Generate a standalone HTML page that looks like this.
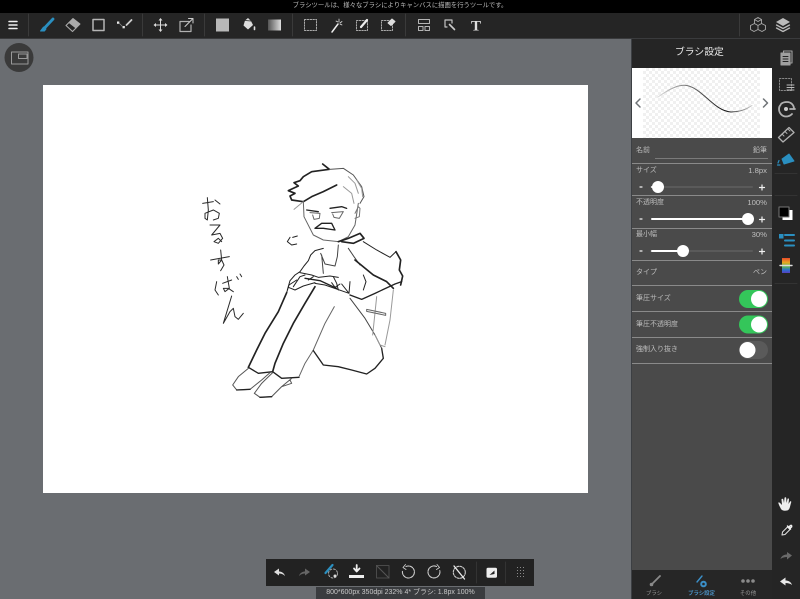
<!DOCTYPE html>
<html lang="ja">
<head>
<meta charset="utf-8">
<style>
html,body{margin:0;padding:0;width:800px;height:599px;overflow:hidden;background:#6a6d71;font-family:"Liberation Sans","Noto Sans CJK JP",sans-serif}
.a{position:absolute}
.t{position:absolute;white-space:nowrap;color:#bebebe;font-size:7px;line-height:10px}
.n{font-size:7.7px}
.r{text-align:right}
.line{position:absolute;left:632px;width:140px;height:1px;background:#8a8a8a}
</style>
</head>
<body>
<div class="a" style="left:0;top:0;width:800px;height:13px;background:#000"></div>
<div class="t" style="left:288px;top:1px;font-size:6.35px;color:#bdbdbd;width:224px;text-align:center">ブラシツールは、様々なブラシによりキャンバスに描画を行うツールです。</div>
<div class="a" style="left:0;top:13px;width:800px;height:25px;background:#252525"></div>
<div class="a" style="left:0;top:38px;width:800px;height:1px;background:#3a3b3d"></div>

<!-- canvas -->
<div class="a" style="left:43px;top:85px;width:545px;height:408px;background:#fff"></div>

<!-- right panel -->
<div class="a" style="left:631px;top:39px;width:1px;height:560px;background:#3c3f43"></div>
<div class="a" style="left:632px;top:39px;width:140px;height:29px;background:#252525"></div>
<div class="t" style="left:675px;top:47px;color:#e8e8e8;font-size:9.8px;line-height:12px">ブラシ設定</div>
<div class="a" style="left:632px;top:68px;width:140px;height:70px;background:#fff"></div>
<div class="a" style="left:643px;top:68px;width:117px;height:70px;background-color:#fff;background-image:linear-gradient(45deg,#f0f0f0 25%,transparent 25%,transparent 75%,#f0f0f0 75%),linear-gradient(45deg,#f0f0f0 25%,transparent 25%,transparent 75%,#f0f0f0 75%);background-size:6px 6px;background-position:0 0,3px 3px"></div>
<div class="a" style="left:632px;top:138px;width:140px;height:432px;background:#4a4a4a"></div>
<div class="a" style="left:632px;top:570px;width:140px;height:29px;background:#262626"></div>
<div class="a" style="left:772px;top:39px;width:28px;height:560px;background:#252525"></div>

<div class="line" style="top:163px"></div>
<div class="line" style="top:195px"></div>
<div class="line" style="top:228px"></div>
<div class="line" style="top:260px"></div>
<div class="line" style="top:285px"></div>
<div class="line" style="top:311px"></div>
<div class="line" style="top:337px"></div>
<div class="line" style="top:363px"></div>
<div class="a" style="left:655px;top:158px;width:113px;height:1px;background:#7a7a7a"></div>

<div class="t" style="left:636px;top:146px">名前</div>
<div class="t r" style="right:33px;top:146px">鉛筆</div>
<div class="t" style="left:636px;top:166px">サイズ</div>
<div class="t r n" style="right:33px;top:166px">1.8px</div>
<div class="t" style="left:636px;top:198px">不透明度</div>
<div class="t r n" style="right:33px;top:198px">100%</div>
<div class="t" style="left:636px;top:230px">最小幅</div>
<div class="t r n" style="right:33px;top:230px">30%</div>
<div class="t" style="left:636px;top:268px">タイプ</div>
<div class="t r" style="right:33px;top:268px">ペン</div>
<div class="t" style="left:636px;top:294px">筆圧サイズ</div>
<div class="t" style="left:636px;top:320px">筆圧不透明度</div>
<div class="t" style="left:636px;top:345px">強制入り抜き</div>
<div class="t" style="left:632px;top:589px;width:44px;text-align:center;font-size:5.4px;color:#9a9a9a">ブラシ</div>
<div class="t" style="left:678px;top:589px;width:47px;text-align:center;font-size:5.4px;color:#4a90c2;font-weight:bold">ブラシ設定</div>
<div class="t" style="left:725px;top:589px;width:46px;text-align:center;font-size:5.4px;color:#9a9a9a">その他</div>

<!-- bottom bar -->
<div class="a" style="left:266px;top:559px;width:268px;height:27px;background:#222;"></div>
<div class="a" style="left:316px;top:587px;width:169px;height:12px;background:#3a3c3f"></div>
<div class="t" style="left:316px;top:588px;width:169px;text-align:center;font-size:7px;color:#c8c8c8">800*600px 350dpi 232% 4* ブラシ: 1.8px 100%</div>

<svg class="a" style="left:0;top:0" width="800" height="599" viewBox="0 0 800 599" fill="none" stroke-linecap="round" stroke-linejoin="round">
<defs>
<linearGradient id="g1"><stop offset="0" stop-color="#555"/><stop offset="1" stop-color="#ddd"/></linearGradient>
<linearGradient id="g2" x1="0" x2="1"><stop offset="0" stop-color="#ddd"/><stop offset=".3" stop-color="#777"/><stop offset=".72" stop-color="#111"/><stop offset="1" stop-color="#ccc"/></linearGradient>
<linearGradient id="g3" x1="0" y1="0" x2="0" y2="1"><stop offset="0" stop-color="#e84a2a"/><stop offset=".3" stop-color="#e8a822"/><stop offset=".55" stop-color="#5fb84a"/><stop offset=".8" stop-color="#2a6fd0"/><stop offset="1" stop-color="#5a3fc0"/></linearGradient>
</defs>
<!-- TOP TOOLBAR -->
<g stroke="#3a3a3a" stroke-width="1"><path d="M28.500 14V36M142.500 14V36M204.500 14V36M292.500 14V36M405.500 14V36M739.500 14V36"/></g>
<path d="M9 21.500H17M9 25H17M9 28.500H17" stroke="#eee" stroke-width="1.500"/>
<path d="M53 19L45 27.500" stroke="#2a8fc0" stroke-width="2.800"/><path d="M43.500 27L40.500 31H44.500L46 29Z" fill="#2a8fc0" stroke="#2a8fc0"/>
<path d="M69 22.500L73 18.500L80 24L76 28Z" fill="#aaa" stroke="#aaa"/><path d="M69 22.500L66 25.500L72.500 31.500L76 28" stroke="#aaa" stroke-width="1.100"/>
<rect x="93" y="19.500" width="11" height="11" stroke="#b5b5b5" stroke-width="1.500"/>
<rect x="117" y="21.500" width="2.300" height="2.300" fill="#eee"/><rect x="122.500" y="26" width="2.300" height="2.300" fill="#eee"/><path d="M119 23L123 27" stroke="#888" stroke-width=".8"/><path d="M126.500 25L131.500 20" stroke="#ccc" stroke-width="1.800"/>
<path d="M160.500 19.500V30.500M155 25H166" stroke="#ddd" stroke-width="1"/>
<g fill="#ddd"><path d="M160.500 18L162.500 20.500H158.500ZM160.500 32L162.500 29.500H158.500ZM153.500 25L156 23V27ZM167.500 25L165 23V27Z"/></g>
<path d="M189 21.500H180V31.500H191V25" stroke="#b0b0b0" stroke-width="1.200"/><path d="M185 26.500L192 19.500" stroke="#ccc" stroke-width="1"/><path d="M188.500 18.500H193V23" stroke="#ccc" stroke-width="1"/>
<rect x="216" y="18.500" width="13" height="13" fill="#b8b8b8"/>
<path d="M245 20.500L248 18L251 21L253 25L248 29.500L243.500 25.500Z" fill="#ddd"/><path d="M245 20.500L251 21" stroke="#252525" stroke-width=".8"/><path d="M254.500 27V29.500" stroke="#ddd" stroke-width="1.600"/>
<rect x="268" y="19.500" width="13" height="11" fill="url(#g1)"/>
<rect x="304.500" y="19.500" width="12" height="11" stroke="#aaa" stroke-dasharray="1.500 1.300"/>
<path d="M332 32L338 24" stroke="#eee" stroke-width="1.500"/><path d="M339 19V22M336 21L338 22M342 21.500L340 23M342 25L340 24" stroke="#ddd" stroke-width=".8"/>
<rect x="356.500" y="20.500" width="11" height="10" stroke="#aaa" stroke-dasharray="1.500 1.300"/><path d="M361 27L367 20" stroke="#eee" stroke-width="2.200"/>
<rect x="381.500" y="20.500" width="11" height="10" stroke="#aaa" stroke-dasharray="1.500 1.300"/><path d="M388 23L392 19L395 21.500L391 25.500Z" fill="#ddd" stroke="#ddd"/>
<path d="M418.500 19.500H429.500V23.500H418.500ZM418.500 26.500H423V30.500H418.500ZM425 26.500H429.500V30.500H425Z" stroke="#b5b5b5" stroke-width="1"/>
<path d="M445 20H452V23M445 20V27H447" stroke="#c4c4c4" stroke-width="1.200"/><path d="M449.500 24.500L454.500 29.500" stroke="#ccc" stroke-width="1.600"/>
<text x="476" y="30.500" text-anchor="middle" font-family="Liberation Serif" font-weight="bold" font-size="15" fill="#ddd" stroke="none">T</text>
<g stroke="#aaa" stroke-width=".9"><path d="M758 17.500L761.500 19.500V23.500L758 25.500L754.500 23.500V19.500ZM754.500 23.500L758 25.500V29.500L754 31.500L750.500 29.500V25.500ZM761.500 23.500L765.500 25.500V29.500L762 31.500L758 29.500V25.500ZM754.500 19.500L758 21.500L761.500 19.500"/></g>
<path d="M783 18L790 22L783 26L776 22Z" fill="#bbb"/><path d="M776.500 25L783 28.500L789.500 25M776.500 28L783 31.500L789.500 28" stroke="#bbb" stroke-width="1.300"/>

<!-- nav circle -->
<circle cx="19" cy="57.500" r="14.500" fill="#3a3a3a"/>
<rect x="11.500" y="52" width="16.500" height="12" stroke="#999" stroke-width="1"/><rect x="18.500" y="54" width="8.500" height="4.500" stroke="#999" stroke-width="1"/>

<!-- PREVIEW -->
<path d="M658 97C672 87 680 84.500 687 85.500C703 89 714 111 731 112C740 112 747 109 752 105.500" stroke="url(#g2)" stroke-width="1"/>
<path d="M640 99L636 103L640 107M763.500 99L767.500 103L763.500 107" stroke="#6e7276" stroke-width="1.500"/>

<!-- SLIDERS -->
<g stroke="#5a5a5a" stroke-width="2"><path d="M651 187H752M651 251H752"/></g>
<path d="M652 187H658M652 219H748M652 251H683" stroke="#fff" stroke-width="2"/>
<g fill="#fff"><circle cx="658" cy="187" r="6"/><circle cx="748" cy="219" r="6"/><circle cx="683" cy="251" r="6"/></g>
<g stroke="#f0f0f0" stroke-width="1.200"><path d="M640 187H642M640 219H642M640 251H642M759.500 187.500H764.500M762 185V190M759.500 219.500H764.500M762 217V222M759.500 251.500H764.500M762 249V254"/></g>

<!-- TOGGLES -->
<rect x="739" y="290" width="29" height="18" rx="9" fill="#34c65a"/><circle cx="759" cy="299" r="8" fill="#fff"/>
<rect x="739" y="315.500" width="29" height="18" rx="9" fill="#34c65a"/><circle cx="759" cy="324.500" r="8" fill="#fff"/>
<rect x="739" y="341" width="29" height="18" rx="9" fill="#5a5a5a"/><circle cx="747.500" cy="350" r="8" fill="#fff"/>

<!-- RIGHT STRIP -->
<g stroke="#a0a0a0" stroke-width="1.100">
<rect x="781" y="53" width="9" height="12" fill="#a0a0a0"/><path d="M783.500 53V51H792V63H790"/>
<path d="M783 56.500H788M783 59H788M783 61.500H788" stroke="#252525" stroke-width="1"/>
</g>
<rect x="779.500" y="78.500" width="12" height="12" stroke="#888" stroke-dasharray="1.500 1.500"/>
<path d="M787 85H794M787 87.500H794M787 90H794" stroke="#bbb" stroke-width="1"/>
<path d="M781 104C783 102 785 102 787 102C791 102 794 105 794 109M792 114C790 116 788 116.500 786 116.500C782 116.500 779 113 779 109C779 107.500 779.500 106 780.500 105" stroke="#b0b0b0" stroke-width="1.800"/><circle cx="786" cy="109" r="2" fill="#ccc"/><path d="M790 109H795" stroke="#b0b0b0" stroke-width="1.800"/>
<path d="M778.500 137.500L789 127.500L794 132.500L783 142Z" stroke="#b0b0b0" stroke-width="1.300"/><path d="M782 134L784 136M785 131.500L787 133.500M788 129L790 131" stroke="#b0b0b0" stroke-width=".9"/>
<path d="M782 159L789 154L794 161L784 164Z" fill="#2a8fc0" stroke="#2a8fc0"/><path d="M779 160.500L778 163M777.500 165H780" stroke="#2a8fc0" stroke-width="1.200"/>
<path d="M775 173.500H797M775 195.500H797M775 283.500H797" stroke="#333" stroke-width="1"/>
<rect x="782.500" y="210" width="10" height="10" fill="#fff"/>
<rect x="779" y="207" width="10" height="10" fill="#000" stroke="#777" stroke-width="1"/>
<rect x="779" y="234" width="4.500" height="4.500" fill="#2a8fc0"/><path d="M785 235H794M785 240.500H794M785 245.500H794" stroke="#2a8fc0" stroke-width="2"/>
<rect x="782" y="258" width="8" height="15" fill="url(#g3)"/><path d="M780 265.500H792" stroke="#ddd" stroke-width="1.400"/>
<path d="M781 509C779 505 778 503 778.500 502.500C779.500 502 781 504 782 505L781.500 499.500C781.500 498.500 783 498.500 783.300 499.500L784 503L784.500 498C784.700 497 786 497 786.200 498L786.500 503L787.500 499C787.800 498 789 498.300 789 499.300L788.500 504L790 501.500C790.500 501 791.500 501.300 791.200 502.300C790 506 790 510 787 510.500C784 511 782 510.500 781 509Z" fill="#eee"/>
<path d="M782.500 532L787.500 527L790 529.500L785 534.500L782 535Z" stroke="#e4e4e4" stroke-width="1"/><path d="M787.500 526L790.500 529M789 527L790.500 525.500C791.500 525 792 526 791.500 527L790 528" stroke="#eee" stroke-width="1.500"/>
<path d="M780.500 559C781.500 555.500 784.500 554.500 787 554.500V552L792 555.500L787 559.500V557C784.500 557 782.500 557.500 780.500 559Z" fill="#6a6a6a"/>
<path d="M792 585C791 581.500 788 580.500 785.500 580.500V577.500L780 581.500L785.500 585.500V583C788 583 790 583.500 792 585Z" fill="#e8e8e8"/>

<!-- TABS -->
<path d="M660 576L653 583" stroke="#8a8a8a" stroke-width="1.800"/><circle cx="651.500" cy="584.500" r="1.800" fill="#8a8a8a"/>
<path d="M702 576L697 582" stroke="#3b8fc8" stroke-width="1.400"/><circle cx="703.500" cy="584" r="2.300" stroke="#3b8fc8" stroke-width="2"/>
<g fill="#8a8a8a"><circle cx="743" cy="581" r="1.800"/><circle cx="748" cy="581" r="1.800"/><circle cx="753" cy="581" r="1.800"/></g>

<!-- BOTTOM ICONS -->
<path d="M285 576C284 572.500 281 571.500 279 571.500V568.500L274 572L279 575.500V573.500C281 573.500 283 574 285 576Z" fill="#e0e0e0"/>
<path d="M299 576C300 572.500 303 571.500 305 571.500V568.500L310 572L305 575.500V573.500C303 573.500 301 574 299 576Z" fill="#666"/>
<path d="M332.500 565L325.500 573" stroke="#2a8fc0" stroke-width="2.200"/><circle cx="333" cy="573.500" r="4.500" stroke="#aaa" stroke-dasharray="1.800 1.800"/><circle cx="335" cy="576" r="1.500" fill="#ddd"/>
<path d="M356.700 565V571M354 568.500L356.700 571.500L359.500 568.500" stroke="#eee" stroke-width="1.800"/><rect x="349" y="575" width="15" height="3" fill="#eee"/>
<rect x="376.500" y="565.500" width="12.500" height="12.500" stroke="#4a4a4a" stroke-width="1"/><path d="M376.500 565.500L389 578" stroke="#555"/>
<path d="M406 566.500A6 6 0 1 1 402.600 570.500" stroke="#ccc" stroke-width="1.100" stroke-dasharray="3 1"/><path d="M405.500 564.500L403 567.500L406 569.500" stroke="#ccc" stroke-width=".9"/>
<path d="M436.500 566.500A6 6 0 1 0 439.800 570.500" stroke="#ccc" stroke-width="1.100" stroke-dasharray="3 1"/><path d="M437 564.500L439.500 567.500L436.500 569.500" stroke="#ccc" stroke-width=".9"/>
<circle cx="459.300" cy="572.300" r="6" stroke="#ccc" stroke-width="1.100" stroke-dasharray="2 1.200"/><path d="M454 566L464.500 579" stroke="#eee" stroke-width="1.300"/>
<path d="M476.500 562V583M505.500 562V583" stroke="#333" stroke-width="1"/>
<rect x="486.500" y="567.700" width="10.500" height="10" rx="1.500" fill="#eee"/><path d="M489.500 575L494.500 570.500V574Z" fill="#222"/>
<g fill="#8a8a8a"><path d="M517 567h1v1h-1zM520 567h1v1h-1zM523 567h1v1h-1zM517 570h1v1h-1zM520 570h1v1h-1zM523 570h1v1h-1zM517 573h1v1h-1zM520 573h1v1h-1zM523 573h1v1h-1zM517 576h1v1h-1zM520 576h1v1h-1zM523 576h1v1h-1z"/></g>

<!-- HIRAGANA (zoom coordinates) -->
<g transform="translate(190 160) scale(.33333)" stroke="#2a2a2a" stroke-width="3">
<path d="M38 130L70 125M52 113L55 150L52 180L45 175L45 160L70 150L88 160L85 175L70 180M75 120L90 132"/>
<path d="M60 195L90 195L65 225L90 220L98 235L85 250L72 245L85 235L95 245"/>
<path d="M62 300L118 290M92 270L95 300L85 312L85 300L95 300L102 315L92 332"/>
<path d="M80 365L75 390L85 405M98 370L125 360M112 350L118 385L105 395L100 385L115 385L130 395M140 350L145 358M150 342L155 350"/>
<path d="M125 408L100 490L120 455L130 445L135 470L145 478L160 460"/>
</g>

<!-- HEAD & TORSO -->
<g transform="translate(280 160) scale(.33333)" stroke="#222" stroke-width="3">
<path d="M30 232L22 245L35 255L50 252M38 232L52 228"/>
<path stroke-width="5" d="M128 12L148 28L95 35L70 50L60 62L42 68L55 78L25 92L45 100L30 108L35 120L70 125L95 110L130 95L170 75"/>
<path stroke="#555" d="M148 28L190 25L220 45L245 80L252 110L240 130"/>
<path stroke="#999" d="M205 50L225 70L235 100M230 60L245 85L248 110M190 80L215 100L222 130M70 125L42 148"/>
<path stroke="#666" d="M70 125L72 170L100 225L130 240L175 245L205 230L225 195L235 130"/>
<path stroke="#777" d="M225 160L235 140L240 145L238 170L225 175"/>
<path stroke-width="4" d="M80 150L115 155M150 145L185 140L200 145"/>
<path stroke="#666" d="M90 158L120 160L118 175L102 178L98 165M155 158L190 155L178 175L162 172L158 162"/>
<path stroke-width="4" d="M105 205L125 190L155 190L165 210L130 205L105 205"/>
<path stroke-width="5" d="M175 245L205 235L240 220L252 235L220 250L185 245"/>
<path stroke-width="3" d="M250 245L290 270L330 292L348 275"/>
<path stroke-width="5" d="M348 275L362 300L358 330L368 348L362 375"/>
<path d="M130 265L105 272L92 285L85 302L72 318L60 335L45 345L30 362L22 390"/>
<path stroke="#444" d="M122 280L135 312L165 318L172 290L175 255M125 285L130 340M205 265L222 290L240 315"/>
<path stroke-width="5" d="M225 300L280 345L320 365L340 385"/>
<path d="M250 345L258 365L250 390"/>
<path d="M60 338L95 345L115 352L150 348L175 352M100 350L85 360M160 350L170 370L175 390M40 380L60 350L75 345"/>
<path stroke-width="4" d="M75 355L120 362L170 385"/>
</g>

<!-- LEGS -->
<g transform="translate(225 280) scale(.33333)" stroke="#222" stroke-width="3">
<path d="M185 38L192 15L215 0M190 22L210 30L235 18L270 8M320 8L330 22L345 12M350 12L372 40L300 15L270 10M375 5L372 40"/>
<path stroke-width="5" d="M185 38L160 95L120 160L95 210L70 262"/>
<path stroke-width="5" d="M270 20L240 70L205 130L175 190L150 250L143 275"/>
<path stroke-width="4" d="M70 262L100 280L143 275L170 295L222 292"/>
<path stroke="#666" d="M328 80L300 130L265 210L240 250L222 290"/>
<path stroke-width="4" d="M265 212L295 255L340 260L380 270L425 282L450 265L475 235L470 205"/>
<path stroke="#444" d="M470 205L450 165L420 115L375 55"/>
<path stroke-width="4" d="M375 45L410 58L450 40L510 12L530 5"/>
<path stroke="#999" d="M455 50L443 165M505 30L495 120L480 195M450 165L465 195L480 200"/>
<path stroke="#666" d="M425 88L482 100L482 106L425 94Z"/>
<path stroke="#555" d="M70 265L40 290L23 315L35 330L75 328L110 300L135 278"/>
<path stroke="#555" d="M143 278L110 310L88 340L105 352L140 350L170 320L200 295M170 320L200 310L195 300"/>
<path stroke="#222" stroke-width="4" d="M35 330L75 328M105 352L140 350"/>
</g>
</svg>
</body>
</html>
